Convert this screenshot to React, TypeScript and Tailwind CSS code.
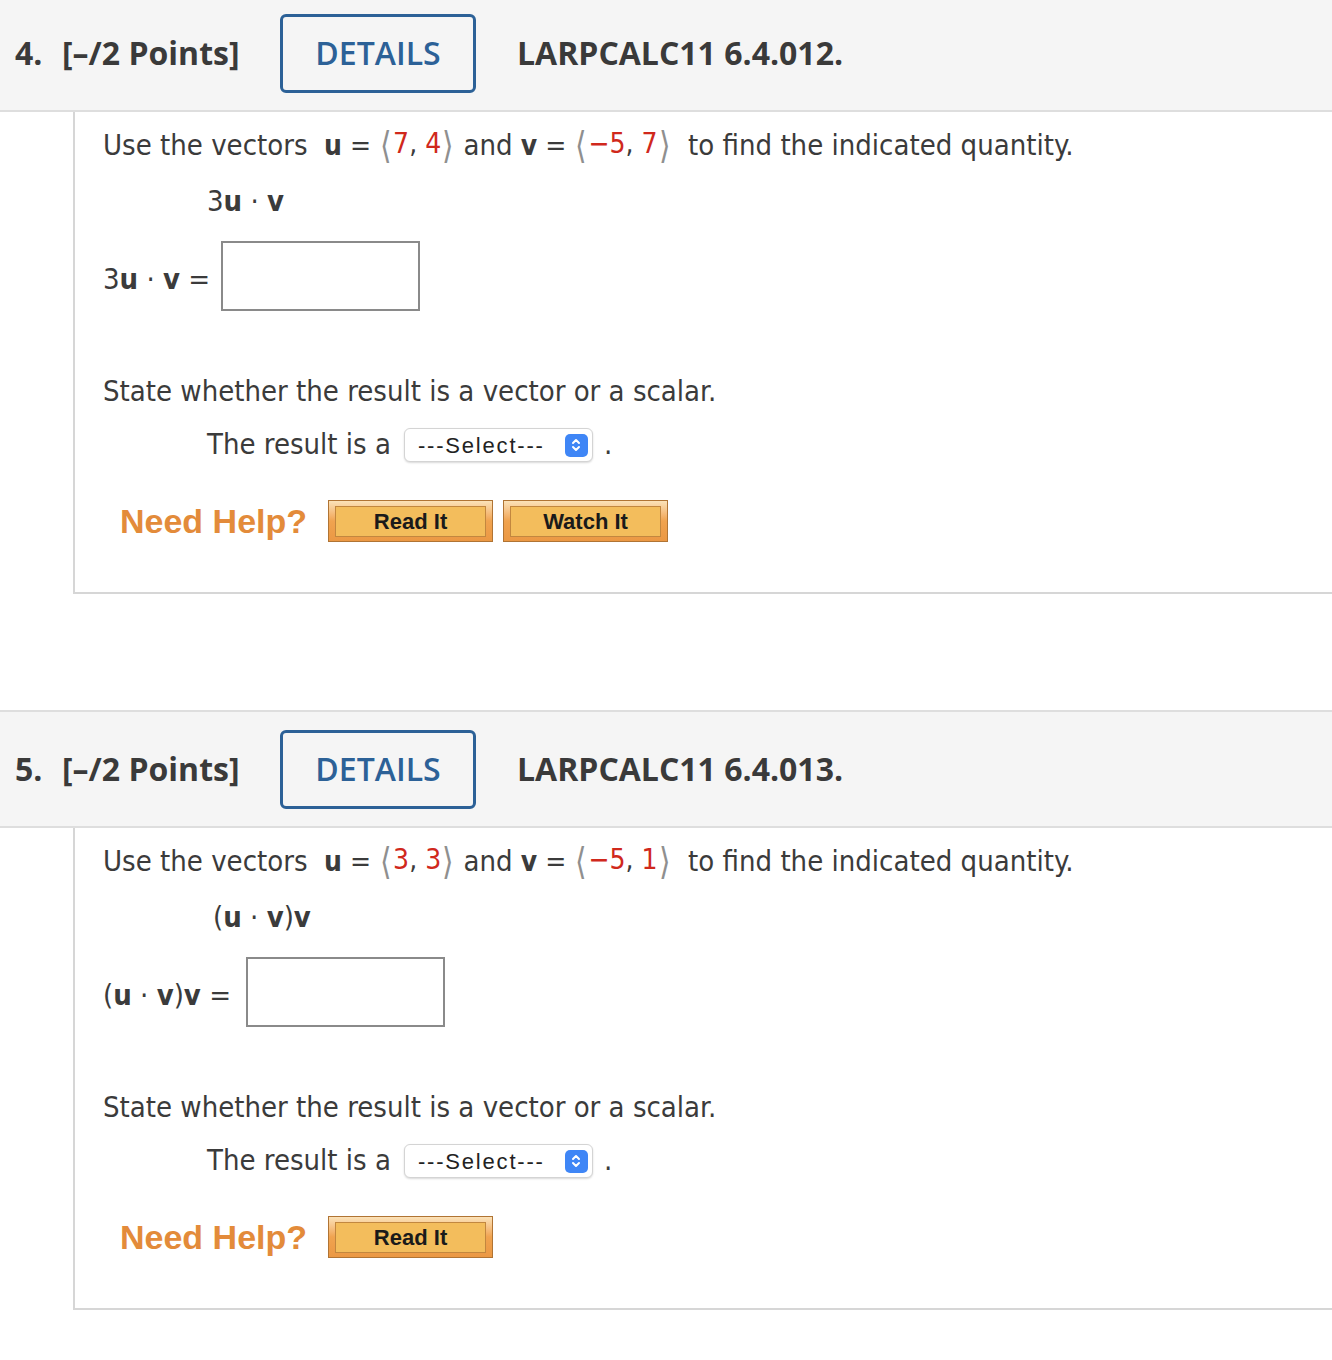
import React from "react";

const MATH = { fontFamily: '"DejaVu Sans", Verdana, sans-serif' };
const TEXT = { fontFamily: '"DejaVu Sans Condensed", "DejaVu Sans", sans-serif', fontStretch: "condensed" as const };

function Br({ c }: { c: string }) {
  return (
    <span
      className="relative top-[1px] inline-block text-[37px] font-extralight leading-none text-[#8f8f8f]"
      style={{ fontFamily: '"DejaVu Sans", sans-serif', transform: "scaleX(0.8)" }}
    >
      {c}
    </span>
  );
}

function Vec({ a, b }: { a: string; b: string }) {
  return (
    <span className="inline-flex items-center">
      <Br c="⟨" />
      <span className="text-[#d0281c]">{a}</span>
      <span className="whitespace-pre">, </span>
      <span className="text-[#d0281c]">{b}</span>
      <Br c="⟩" />
    </span>
  );
}

function Select() {
  return (
    <div className="flex h-[34px] w-[189px] items-center justify-between rounded-[6px] border border-[#d4d4d4] bg-white pl-[13px] pr-[4px] shadow-[0_1px_2px_rgba(0,0,0,0.15)]">
      <span className="text-[22px] tracking-[1.8px] text-[#222]" style={{ fontFamily: '"Liberation Sans", Arial, sans-serif' }}>---Select---</span>
      <span className="flex h-[23px] w-[23px] items-center justify-center rounded-[5px] bg-[#3f86f6]">
        <svg width="12" height="16" viewBox="0 0 12 16" fill="none" stroke="white" strokeWidth="2" strokeLinecap="round" strokeLinejoin="round">
          <path d="M3 6 L6 3 L9 6" />
          <path d="M3 10 L6 13 L9 10" />
        </svg>
      </span>
    </div>
  );
}

function HelpBtn({ label }: { label: string }) {
  return (
    <div className="h-[42px] w-[165px] border border-[#b07434] bg-gradient-to-b from-[#fbe2b8] via-[#f0a34f] to-[#eb9844] px-[6px] pb-[4px] pt-[5px]">
      <div className="flex h-full w-full items-center justify-center border border-[#c2873f] bg-[#f3bd5c]">
        <span className="text-[22px] font-bold text-[#1a1a1a]" style={{ fontFamily: '"Liberation Sans", Arial, sans-serif' }}>{label}</span>
      </div>
    </div>
  );
}

function Header({ num, code, first }: { num: string; code: string; first?: boolean }) {
  return (
    <div
      className={`flex h-[118px] items-center border-y-2 border-[#dedede] bg-[#f5f5f5] text-[32px] font-bold text-[#3a3a3a] ${first ? "-mt-[6px]" : ""}`}
      style={{ fontFamily: '"Open Sans", sans-serif' }}
    >
      <span className="ml-[15px] w-[47px]">{num}</span>
      <span className="w-[218px]">[–/2 Points]</span>
      <div className="flex h-[79px] w-[196px] items-center justify-center rounded-[6px] border-[3px] border-[#2c6197] font-semibold text-[#2c6197]">
        DETAILS
      </div>
      <span className="ml-[41px]">{code}</span>
    </div>
  );
}

function Question({
  num,
  code,
  u,
  v,
  expr,
  watch,
  first,
  paren,
}: {
  num: string;
  code: string;
  u: [string, string];
  v: [string, string];
  expr: React.ReactNode;
  watch?: boolean;
  first?: boolean;
  paren?: boolean;
}) {
  return (
    <div className="mb-[116px]">
      <Header num={num} code={code} first={first} />
      <div className="ml-[73px] h-[482px] border-b-2 border-l-2 border-[#d6d6d6] pl-[28px] pt-[14px] text-[29px] text-[#3b3b3b]" style={TEXT}>
        <div className="flex h-[40px] items-center whitespace-pre">
          <span>Use the vectors  </span>
          <span style={MATH} className="text-[28px] font-bold">u</span>
          <span style={MATH} className="text-[28px]"> = </span>
          <span style={MATH} className="text-[28px]"><Vec a={u[0]} b={u[1]} /></span>
          <span> and </span>
          <span style={MATH} className="text-[28px] font-bold">v</span>
          <span style={MATH} className="text-[28px]"> = </span>
          <span style={MATH} className="text-[28px]"><Vec a={v[0]} b={v[1]} /></span>
          <span>  to find the indicated quantity.</span>
        </div>
        <div className={`mt-[16px] flex h-[40px] items-center text-[29px] ${paren ? "pl-[110px]" : "pl-[104px]"}`} style={MATH}>
          {expr}
        </div>
        <div className="mt-[19px] flex h-[70px] items-center text-[29px]" style={MATH}>
          <span className="mt-[8px] whitespace-pre">{expr}<span> = </span></span>
          <div className={`${paren ? "ml-[7px]" : "ml-[2px]"} h-[70px] w-[199px] border-2 border-[#8a8a8a] bg-white`} />
        </div>
        <div className="mt-[61px] flex h-[40px] items-center">State whether the result is a vector or a scalar.</div>
        <div className="mt-[13px] flex h-[40px] items-center pl-[104px]">
          <span>The result is a</span>
          <span className="ml-[13px]"><Select /></span>
          <span className="ml-[11px]">.</span>
        </div>
        <div className="mt-[35px] flex h-[42px] items-center pl-[17px]">
          <span className="mr-[21px] text-[34px] font-bold text-[#e38b3a]" style={{ fontFamily: '"Liberation Sans", Arial, sans-serif' }}>
            Need Help?
          </span>
          <HelpBtn label="Read It" />
          {watch && (
            <span className="ml-[10px]">
              <HelpBtn label="Watch It" />
            </span>
          )}
        </div>
      </div>
    </div>
  );
}

export default function App() {
  return (
    <div className="min-h-[1360px] w-[1332px] overflow-hidden bg-white">
      <Question
        first
        num="4."
        code="LARPCALC11 6.4.012."
        u={["7", "4"]}
        v={["−5", "7"]}
        watch
        expr={
          <span className="whitespace-pre">
            3<b>u</b> · <b>v</b>
          </span>
        }
      />
      <Question
        paren
        num="5."
        code="LARPCALC11 6.4.013."
        u={["3", "3"]}
        v={["−5", "1"]}
        expr={
          <span className="whitespace-pre">
            (<b>u</b> · <b>v</b>)<b>v</b>
          </span>
        }
      />
    </div>
  );
}
